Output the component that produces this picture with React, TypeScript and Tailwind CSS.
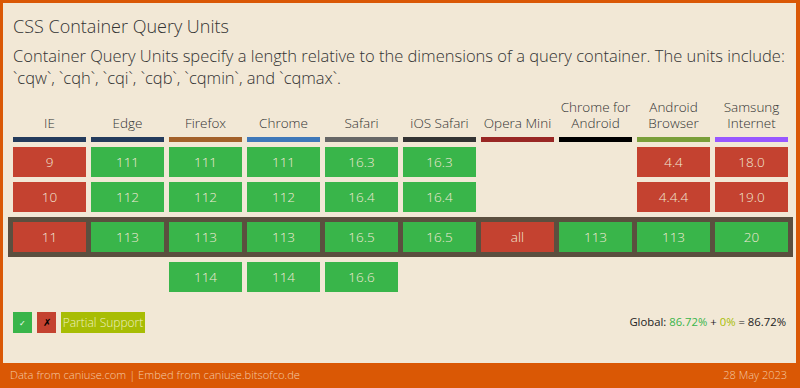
import React from 'react';

type Cell = { v: string; s: 'y' | 'n' } | null;

const browsers: { name: string[]; bar: string; rows: Cell[] }[] = [
  { name: ['IE'], bar: 'bg-[#243b5c]', rows: [{ v: '9', s: 'n' }, { v: '10', s: 'n' }, { v: '11', s: 'n' }, null] },
  { name: ['Edge'], bar: 'bg-[#243b5c]', rows: [{ v: '111', s: 'y' }, { v: '112', s: 'y' }, { v: '113', s: 'y' }, null] },
  { name: ['Firefox'], bar: 'bg-[#a3612a]', rows: [{ v: '111', s: 'y' }, { v: '112', s: 'y' }, { v: '113', s: 'y' }, { v: '114', s: 'y' }] },
  { name: ['Chrome'], bar: 'bg-[#3f78b9]', rows: [{ v: '111', s: 'y' }, { v: '112', s: 'y' }, { v: '113', s: 'y' }, { v: '114', s: 'y' }] },
  { name: ['Safari'], bar: 'bg-[#666666]', rows: [{ v: '16.3', s: 'y' }, { v: '16.4', s: 'y' }, { v: '16.5', s: 'y' }, { v: '16.6', s: 'y' }] },
  { name: ['iOS Safari'], bar: 'bg-[#333333]', rows: [{ v: '16.3', s: 'y' }, { v: '16.4', s: 'y' }, { v: '16.5', s: 'y' }, null] },
  { name: ['Opera Mini'], bar: 'bg-[#992724]', rows: [null, null, { v: 'all', s: 'n' }, null] },
  { name: ['Chrome for', 'Android'], bar: 'bg-black', rows: [null, null, { v: '113', s: 'y' }, null] },
  { name: ['Android', 'Browser'], bar: 'bg-[#7a9f3a]', rows: [{ v: '4.4', s: 'n' }, { v: '4.4.4', s: 'n' }, { v: '113', s: 'y' }, null] },
  { name: ['Samsung', 'Internet'], bar: 'bg-[#9857ff]', rows: [{ v: '18.0', s: 'n' }, { v: '19.0', s: 'n' }, { v: '20', s: 'y' }, null] },
];

const CellBox = ({ cell }: { cell: Cell }) =>
  cell ? (
    <div
      className={`w-[73px] h-[30px] flex items-center justify-center text-[13.5px] font-light text-[#f2e8d6] ${
        cell.s === 'y' ? 'bg-[#39b54a]' : 'bg-[#c44230]'
      }`}
    >
      {cell.v}
    </div>
  ) : (
    <div className="w-[73px] h-[30px]" />
  );

const Row = ({ i }: { i: number }) => (
  <div className="flex gap-[5px]">
    {browsers.map((b, j) => (
      <CellBox key={j} cell={b.rows[i]} />
    ))}
  </div>
);

export default function App() {
  return (
    <div
      className="w-[800px] h-[388px] bg-[#da5805] flex flex-col text-[#333333]"
      style={{ fontFamily: '"Open Sans", sans-serif' }}
    >
      <div className="flex-1 ml-[3px] mr-[4px] mt-[3px] bg-[#f2e8d6] pl-[10px] pt-[9px] flex flex-col">
        <h1 className="text-[18px] leading-[28px] font-light">CSS Container Query Units</h1>
        <p className="mt-[5px] text-[16.5px] leading-[22px] font-light pr-[2px]">
          Container Query Units specify a length relative to the dimensions of a query container. The units include:
          `cqw`, `cqh`, `cqi`, `cqb`, `cqmin`, and `cqmax`.
        </p>

        {/* browser headers */}
        <div className="flex gap-[5px] mt-[10px] items-end">
          {browsers.map((b, j) => (
            <div key={j} className="w-[73px] flex flex-col items-center">
              <div className="text-[13.5px] leading-[16px] font-light text-center whitespace-nowrap">
                {b.name.map((n) => (
                  <div key={n}>{n}</div>
                ))}
              </div>
              <div className="mt-[6px] w-full h-[5px]">
                <div className={`w-full h-full ${b.bar}`} />
              </div>
            </div>
          ))}
        </div>

        <div className="mt-[5px] flex flex-col gap-[5px]">
          <Row i={0} />
          <Row i={1} />
          <div className="-ml-[5px] w-[785px] p-[5px] bg-[#5b4f3f]">
            <Row i={2} />
          </div>
          <Row i={3} />
        </div>

        <div className="mt-[20px] flex items-center justify-between pr-[10px]">
          <div className="flex gap-[5px]">
            <div className="w-[19px] h-[21px] bg-[#39b54a] flex items-center justify-center text-white text-[8px]">✓</div>
            <div className="w-[19px] h-[21px] bg-[#c44230] flex items-center justify-center text-black text-[10px]">✗</div>
            <div className="w-[84px] h-[21px] bg-[#a8bd04] flex items-center justify-center text-[12px] font-light text-[#eef0c0] whitespace-nowrap">
              Partial Support
            </div>
          </div>
          <div className="text-[11.3px] text-[#222222]">
            Global: <span className="text-[#39b54a]">86.72%</span> + <span className="text-[#a8bd04]">0%</span> = 86.72%
          </div>
        </div>
      </div>
      <div className="h-[25px] flex items-center justify-between pl-[10px] pr-[13px] text-[11.2px] font-light text-[#f4c9a4]">
        <span>Data from caniuse.com | Embed from caniuse.bitsofco.de</span>
        <span className="text-[11px]">28 May 2023</span>
      </div>
    </div>
  );
}
